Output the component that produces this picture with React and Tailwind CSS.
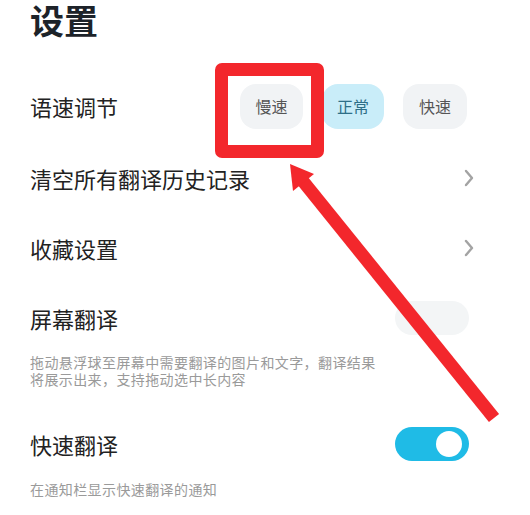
import React from "react";

const font = { fontFamily: '"Noto Sans CJK SC", "Noto Sans", sans-serif' };

function Chevron() {
  return (
    <svg width="10" height="18" viewBox="0 0 10 18" className="mr-[-5px]">
      <path d="M2 2 L8 9 L2 16" fill="none" stroke="#a3a3a3" strokeWidth="2.4" strokeLinecap="round" strokeLinejoin="round" />
    </svg>
  );
}

function Toggle({ on }) {
  return (
    <div className={"w-[74px] h-[34px] rounded-full flex items-center px-[7px] " + (on ? "bg-[#1fbbe6] justify-end" : "bg-[#f3f5f6] justify-start")}>
      {on && <div className="w-[26px] h-[26px] rounded-full bg-white" />}
    </div>
  );
}

export default function App() {
  return (
    <div className="relative w-[530px] h-[515px] bg-white overflow-hidden" style={font}>
      <div className="pl-[30px] pr-[61px]">
        <div className="h-[40px] text-[34px] leading-[39px] font-bold text-[#1d2329]">设置</div>

        <div className="mt-[30px] h-[72px] flex items-center justify-between">
          <div className="text-[22px] text-[#222]">语速调节</div>
          <div className="flex items-center gap-[19px] mr-[2px]">
            <div className="w-[63px] h-[45px] rounded-[16px] bg-[#f1f3f5] flex items-center justify-center text-[16px] text-[#555]">慢速</div>
            <div className="w-[62px] h-[45px] rounded-[16px] bg-[#c9edf9] flex items-center justify-center text-[16px] text-[#2e6f88]">正常</div>
            <div className="w-[64px] h-[45px] rounded-[16px] bg-[#f1f3f5] flex items-center justify-center text-[16px] text-[#555]">快速</div>
          </div>
        </div>

        <div className="h-[72px] flex items-center justify-between">
          <div className="text-[22px] text-[#222]">清空所有翻译历史记录</div>
          <Chevron />
        </div>

        <div className="h-[68px] flex items-center justify-between">
          <div className="text-[22px] text-[#222]">收藏设置</div>
          <Chevron />
        </div>

        <div className="h-[72px] flex items-center justify-between">
          <div className="text-[22px] text-[#222]">屏幕翻译</div>
          <Toggle on={false} />
        </div>
        <div className="text-[14px] leading-[17px] tracking-[0.4px] text-[#9a9a9a] w-[350px]">
          拖动悬浮球至屏幕中需要翻译的图片和文字，翻译结果将展示出来，支持拖动选中长内容
        </div>

        <div className="mt-[21px] h-[70px] flex items-center justify-between">
          <div className="text-[22px] text-[#222]">快速翻译</div>
          <Toggle on={true} />
        </div>
        <div className="mt-[2px] text-[14px] leading-[17px] tracking-[0.4px] text-[#9a9a9a]">在通知栏显示快速翻译的通知</div>
      </div>

      <div className="absolute left-[215px] top-[63px] w-[109px] h-[95px] border-[13px] border-[#f3272c] rounded-[7px]" />
      <svg className="absolute left-0 top-0 pointer-events-none" width="530" height="515">
        <line x1="302" y1="180" x2="494" y2="418" stroke="#f3272c" strokeWidth="13" strokeLinecap="butt" />
        <polygon points="290,164 314,174 293,191" fill="#f3272c" />
      </svg>
    </div>
  );
}
